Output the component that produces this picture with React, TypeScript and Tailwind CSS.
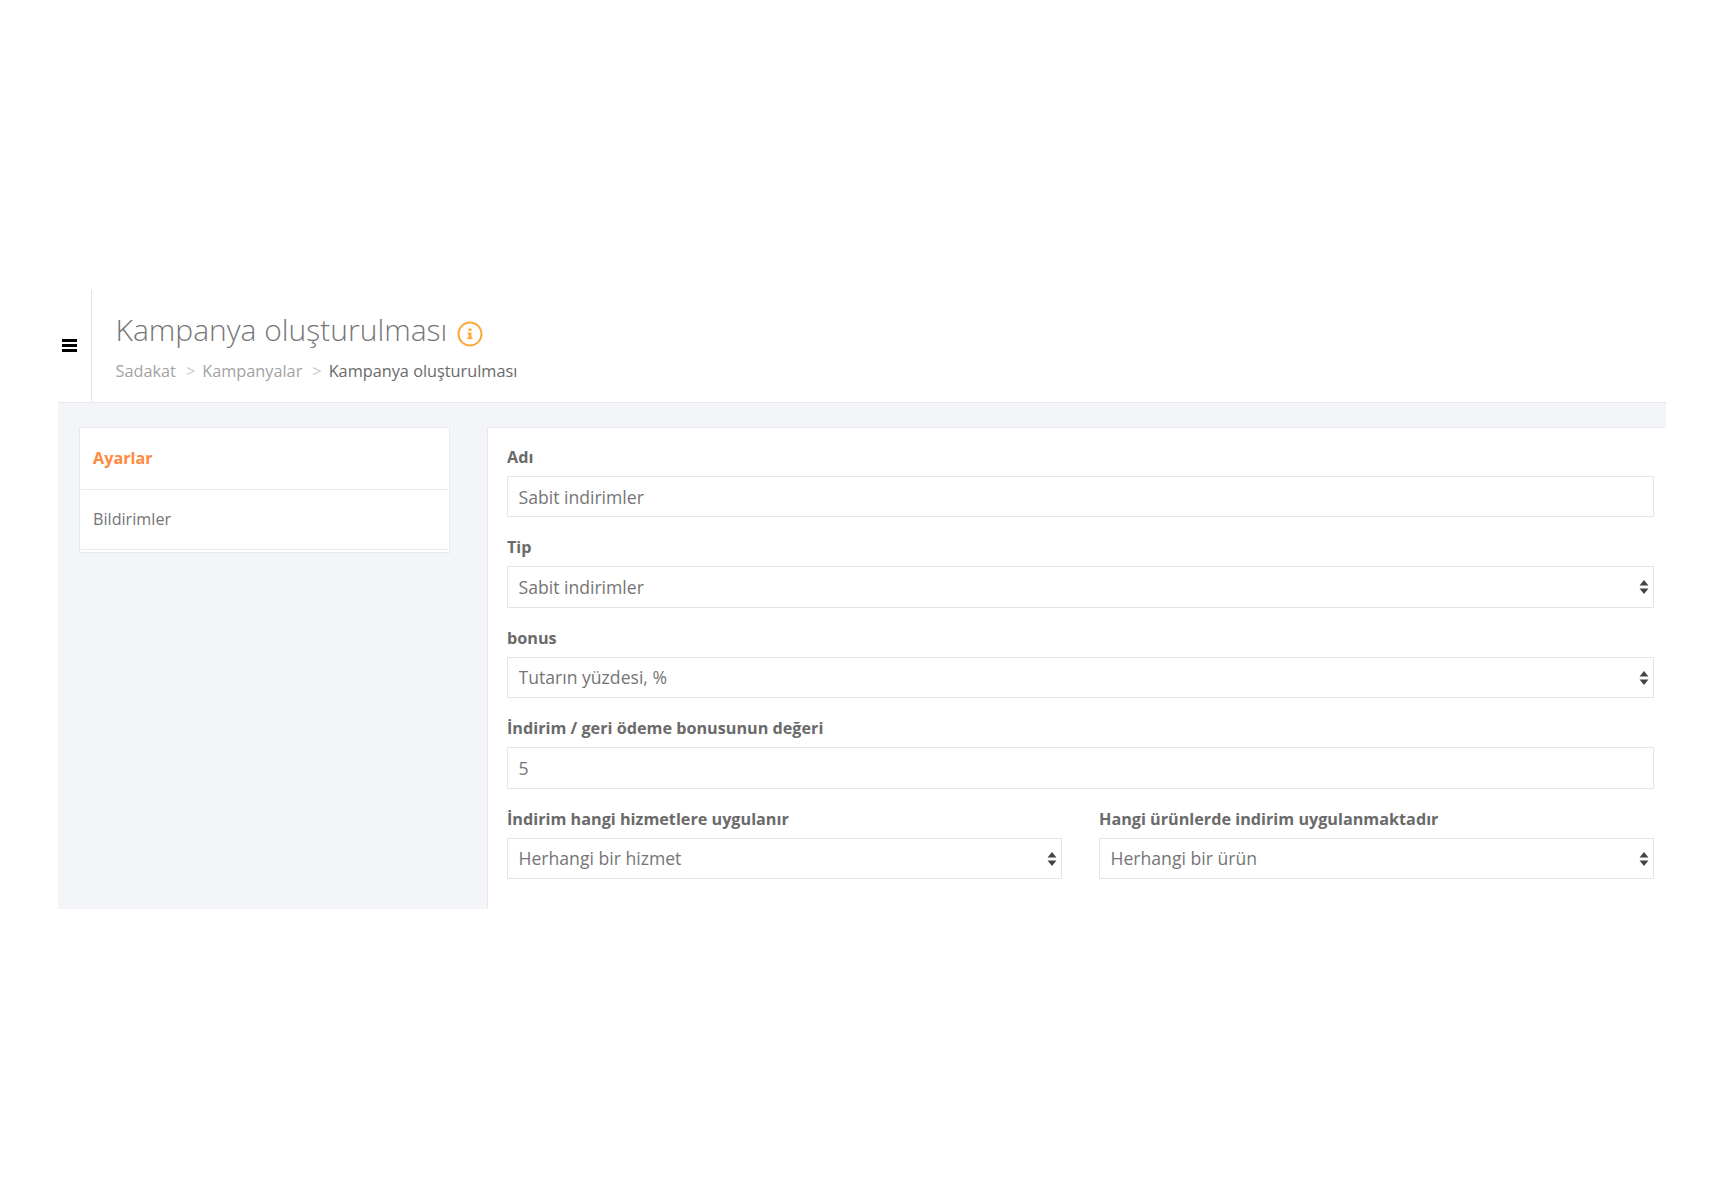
import React from 'react';

const font = { fontFamily: '"Open Sans", "Noto Sans", sans-serif' };

function Arrows() {
  return (
    <svg
      className="absolute right-[5px] top-1/2 -translate-y-1/2 pointer-events-none"
      width="10"
      height="15"
      viewBox="0 0 10 15"
    >
      <path d="M5 0.5 L9.5 6 H0.5 Z" fill="#444" />
      <path d="M0.5 9 H9.5 L5 14.5 Z" fill="#444" />
    </svg>
  );
}

function Field({ label, value }: { label: string; value: string }) {
  return (
    <div className="mb-[19px]">
      <label className="block h-[24px] mb-[6px] text-[16.2px] leading-[23px] font-bold text-[#6a6a6a]">{label}</label>
      <input
        readOnly
        value={value}
        className="block w-full h-[41.5px] px-[10.5px] bg-white border border-[#e5e5e5] text-[17.6px] text-[#757575] outline-none"
      />
    </div>
  );
}

function SelectField({ label, value }: { label: string; value: string }) {
  return (
    <div className="mb-[19px] last:mb-0">
      <label className="block h-[24px] mb-[6px] text-[16.2px] leading-[23px] font-bold text-[#6a6a6a] whitespace-nowrap">
        {label}
      </label>
      <div className="relative">
        <select className="block w-full h-[41.5px] px-[10.5px] bg-white border border-[#e5e5e5] text-[17.6px] text-[#757575] outline-none appearance-none">
          <option>{value}</option>
        </select>
        <Arrows />
      </div>
    </div>
  );
}

export default function App() {
  return (
    <div className="min-h-[1200px] bg-white pt-[290px] pl-[58px] pr-[58px]" style={font}>
      {/* Header */}
      <header className="flex h-[112px]">
        <div className="w-[34px] flex items-center justify-end pr-[14px] pb-[2px] border-r border-[#e4e4e4]">
          <div className="flex flex-col gap-[2px] w-[15px] shrink-0">
            <span className="block h-[3px] bg-black" />
            <span className="block h-[3px] bg-black" />
            <span className="block h-[3px] bg-black" />
          </div>
        </div>
        <div className="pl-[23.5px] pt-[22px]">
          <div className="flex items-center h-[36px]">
            <h1 className="text-[30px] leading-[36px] font-light text-[#777]">Kampanya oluşturulması</h1>
            <svg className="ml-[10px] mt-[8px]" width="26" height="26" viewBox="0 0 26 26">
              <circle cx="13" cy="13" r="11.5" fill="none" stroke="#fbaa3c" strokeWidth="2" />
              <rect x="11.5" y="7.5" width="3" height="2.6" fill="#fbaa3c" />
              <path d="M10.5 11.5 H14.5 V16.5 H15.5 V18.3 H10.5 V16.5 H11.5 V13.2 H10.5 Z" fill="#fbaa3c" />
            </svg>
          </div>
          <div className="flex items-center mt-[11px] text-[16.3px] leading-[24px] text-[#a3a3a3]">
            <span>Sadakat</span>
            <span className="ml-[10px] mr-[7px] text-[#c8c8c8]">&gt;</span>
            <span>Kampanyalar</span>
            <span className="ml-[10px] mr-[7px] text-[#c8c8c8]">&gt;</span>
            <span className="text-[#6a6a6a]">Kampanya oluşturulması</span>
          </div>
        </div>
      </header>

      {/* Content */}
      <div className="flex h-[507px] bg-[#f4f5f9] border-t border-[#e8e9ed] pt-[24px] pl-[21px]">
        <aside className="w-[371px] h-[126px] bg-white border border-[#e8e9ed] px-px">
          <div className="h-[62px] pl-[12px] flex items-center border-b border-[#e8e9ed] text-[16.2px] font-bold text-[#ff8a3d]">
            Ayarlar
          </div>
          <div className="h-[60px] pl-[12px] flex items-center border-b border-[#e8e9ed] text-[16.2px] text-[#757575]">
            Bildirimler
          </div>
        </aside>
        <main className="ml-[37px] flex-1 bg-white border-t border-l border-[#e8e9ed] pt-[17.75px] pl-[19px] pr-[12px]">
          <Field label="Adı" value="Sabit indirimler" />
          <SelectField label="Tip" value="Sabit indirimler" />
          <SelectField label="bonus" value="Tutarın yüzdesi, %" />
          <Field label="İndirim / geri ödeme bonusunun değeri" value="5" />
          <div className="grid grid-cols-2 gap-x-[37px]">
            <SelectField label="İndirim hangi hizmetlere uygulanır" value="Herhangi bir hizmet" />
            <SelectField label="Hangi ürünlerde indirim uygulanmaktadır" value="Herhangi bir ürün" />
          </div>
        </main>
      </div>
    </div>
  );
}
